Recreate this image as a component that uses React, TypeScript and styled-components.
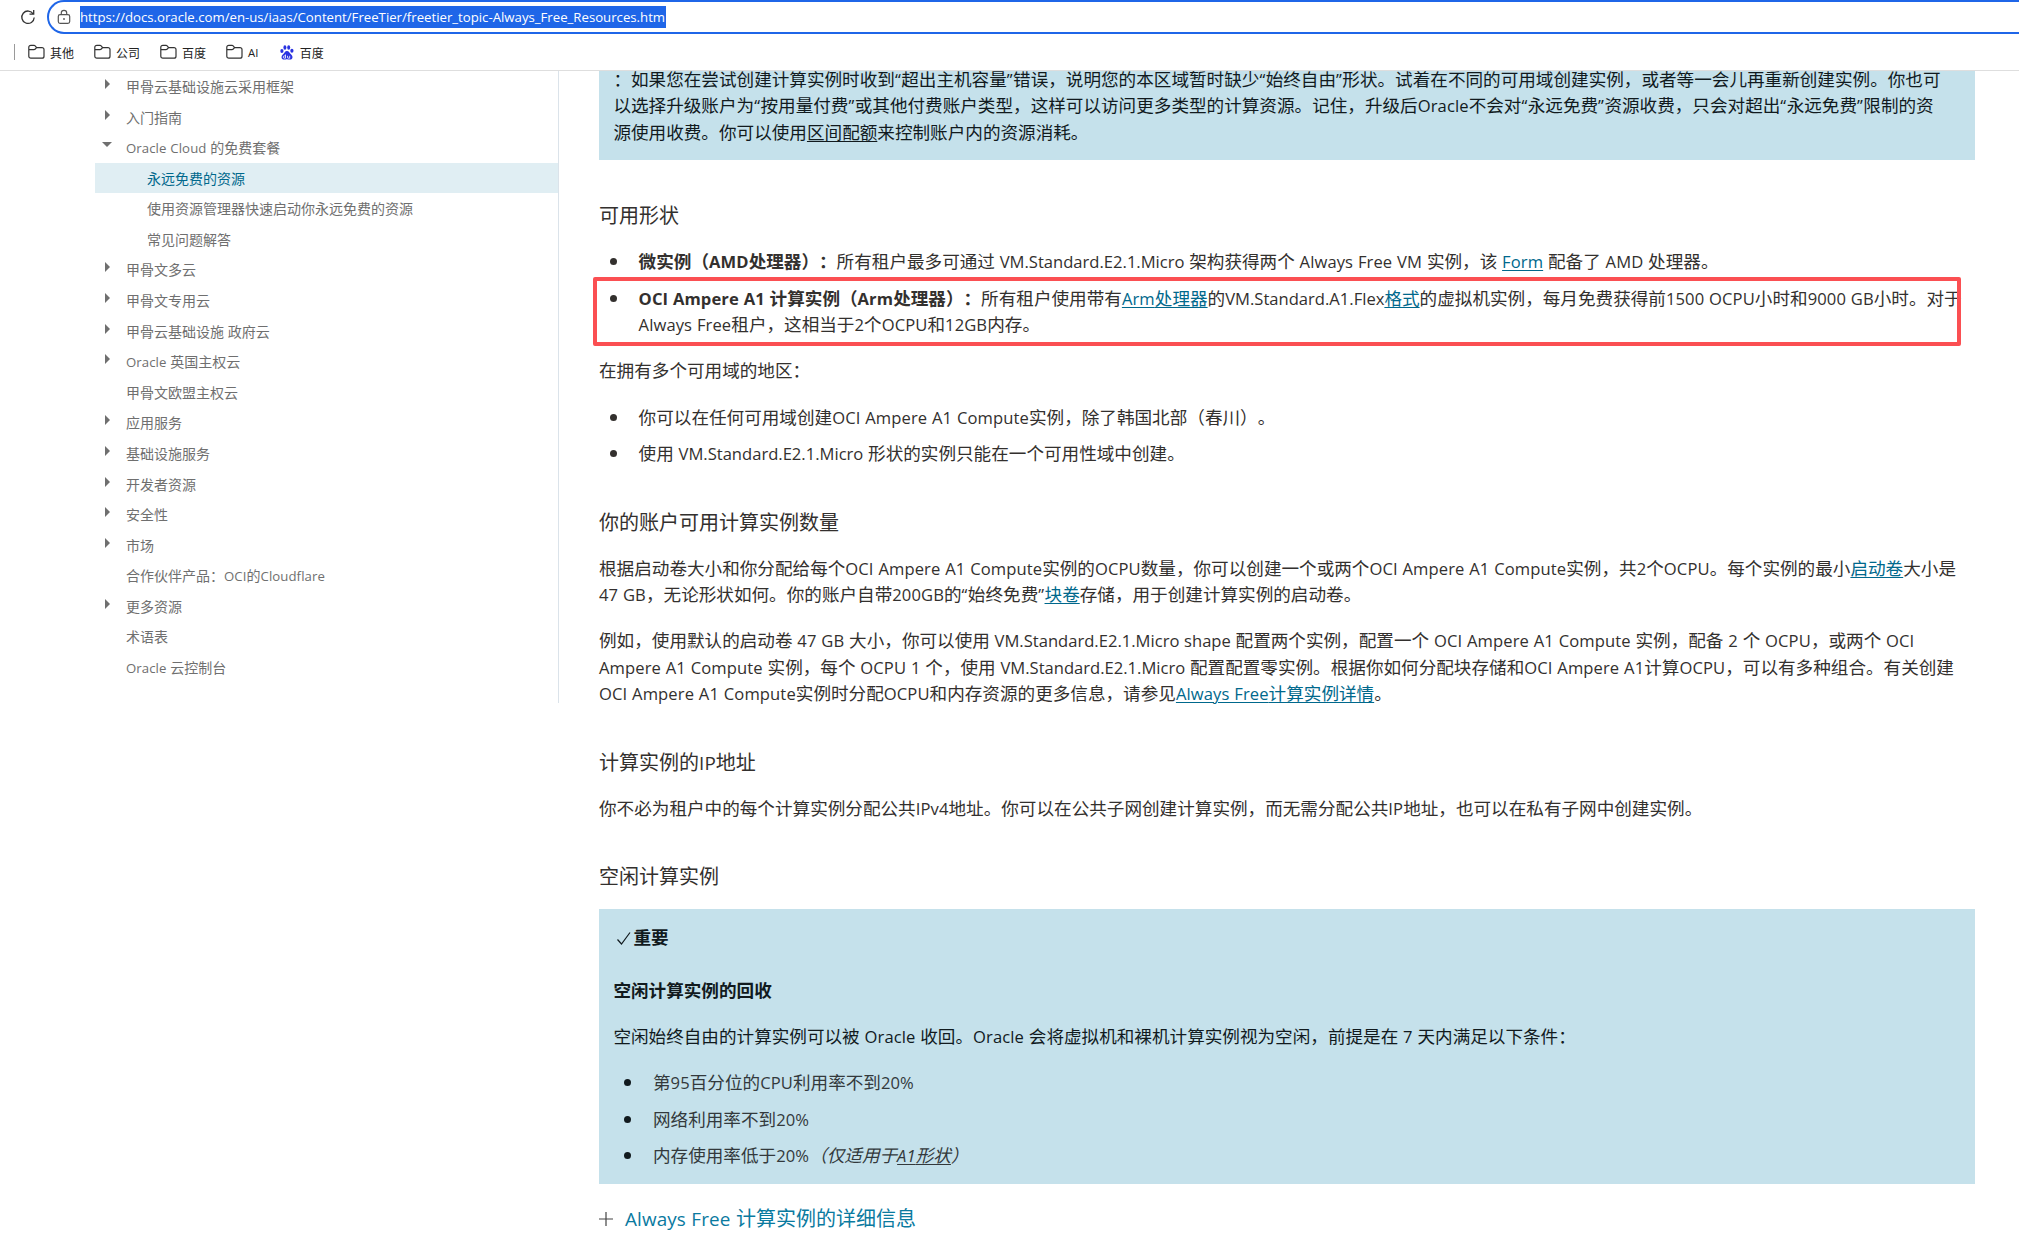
import React from "react";
import styled, { createGlobalStyle, css } from "styled-components";

const Global = createGlobalStyle`
  *, *::before, *::after { box-sizing: border-box; }
  html, body { margin: 0; background: #fff; overflow: hidden; }
  body {
    font-family: "Noto Sans CJK SC", sans-serif;
    font-size: 17.6px;
    color: #33302e;
    text-spacing-trim: space-all;
  }
`;

const Latin = styled.span<{ $spacing: number }>`
  font-family: "Open Sans", "Noto Sans", sans-serif;
  font-size: 0.943em;
  letter-spacing: ${(p) => p.$spacing}em;
  word-spacing: 0.024em;
`;

const runs = /([\u0020-\u007e]+|[\u201c\u201d])/;

const spacingOf = (run: string) => {
  if (/[\u201c\u201d]/.test(run)) return 0.03;
  return /VM\.|https/.test(run) ? 0 : 0.006;
};

/* Sets latin runs in the latin face and leaves the Chinese text as it is. */
const T = ({ children }: { children: string }) => (
  <>
    {children.split(runs).map((part, i) =>
      i % 2 ? (
        <Latin key={i} $spacing={spacingOf(part)}>
          {part}
        </Latin>
      ) : (
        part
      )
    )}
  </>
);

const Page = styled.div`
  width: 2019px;
  height: 1240px;
  overflow: hidden;
  display: flex;
  flex-direction: column;
`;

const Chrome = styled.header`
  height: 71px;
  flex: none;
  border-bottom: 1px solid #dedede;
`;

const AddressRow = styled.div`
  display: flex;
  height: 34px;
  padding-left: 20px;
  align-items: center;
`;

const AddressBox = styled.div`
  flex: 1;
  display: flex;
  align-items: center;
  height: 34px;
  margin-left: 11px;
  padding-left: 8px;
  border: 2px solid #1f66e8;
  border-right: 0;
  border-radius: 17px 0 0 17px;
`;

const Url = styled.span`
  margin-left: 9px;
  height: 22px;
  line-height: 21px;
  background: #1f66e8;
  color: #fff;
  font-size: 14px;
  width: 586px;
  white-space: nowrap;
`;

const Bookmarks = styled.div`
  display: flex;
  align-items: center;
  height: 36px;
  padding-left: 14px;
  font-size: 12px;
  color: #222;
`;

const Divider = styled.i`
  width: 1px;
  height: 16px;
  background: #9a9a9a;
  margin-right: 13px;
`;

const Bookmark = styled.div<{ $w: number }>`
  display: flex;
  align-items: center;
  gap: 5px;
  width: ${(p) => p.$w}px;
`;

const Body = styled.div`
  display: flex;
  flex: 1;
  min-height: 0;
`;

const Sidebar = styled.nav`
  margin-left: 95px;
  width: 464px;
  height: 632px;
  border-right: 1px solid #dbe3ea;
  font-size: 14px;
  color: #6f6f6f;
`;

const Item = styled.div<{ $child?: boolean; $active?: boolean }>`
  display: flex;
  height: 30.58px;
  line-height: 30px;
  padding-left: ${(p) => (p.$child ? 52 : 9)}px;
  ${(p) =>
    p.$active &&
    css`
      background: #e0eef3;
      color: #00688c;
    `}
`;

const Arrow = styled.span<{ $kind: string }>`
  width: 22px;
  display: block;
  &::before {
    content: "";
    display: block;
    width: 0;
    height: 0;
    ${(p) =>
      p.$kind === "open"
        ? css`
            margin-top: 10px;
            margin-left: -2px;
            border: 5px solid transparent;
            border-top-color: #6f6f6f;
            border-bottom: 0;
          `
        : p.$kind === "closed"
        ? css`
            margin: 8px 0 0 1px;
            border: 5px solid transparent;
            border-left-color: #6f6f6f;
            border-right: 0;
          `
        : ""}
  }
`;

const Content = styled.main`
  margin-left: 40px;
  width: 1376px;
  line-height: 26.4px;
`;

const Notice = styled.section`
  background: #c5e1eb;
  color: #111a1e;
  padding: 0 14.4px;
`;

const TopNotice = styled(Notice)`
  height: 89px;
`;

const IdleNotice = styled(Notice)`
  height: 275px;
  padding-top: 15px;
`;

const Line = styled.div`
  white-space: nowrap;
  height: 26.4px;
`;

const FirstLine = styled(Line)`
  height: 21.4px;
  line-height: 16.4px;
`;

const Heading = styled.h3<{ $top: number }>`
  margin: ${(p) => p.$top}px 0 0;
  font-size: 20px;
  line-height: 30px;
  height: 30px;
  font-weight: 400;
`;

const Para = styled.div<{ $top: number }>`
  margin-top: ${(p) => p.$top}px;
`;

const Bullet = styled.div<{ $top: number }>`
  margin-top: ${(p) => p.$top}px;
  padding-left: 11px;
  display: flex;
  &::before {
    content: "";
    flex: none;
    width: 7px;
    height: 7px;
    margin: 10px 21.6px 0 0;
    border-radius: 50%;
    background: currentColor;
  }
`;

const Boxed = styled.div`
  position: relative;
  &::after {
    content: "";
    position: absolute;
    left: -6px;
    top: -8px;
    width: 1368px;
    height: 69px;
    border: 4px solid #fb4f52;
    border-radius: 2px;
  }
`;

const Link = styled.a<{ $dark?: boolean }>`
  color: ${(p) => (p.$dark ? "inherit" : "#00688c")};
  text-decoration: underline;
  text-decoration-thickness: 1px;
  text-underline-offset: 2px;
`;

const Soft = styled(Line)`
  color: #33393c;
`;

const Check = styled.svg`
  vertical-align: -2px;
  margin-left: 3px;
`;

const Expander = styled.div`
  display: flex;
  align-items: center;
  gap: 12px;
  margin-top: 20px;
  height: 30px;
  font-size: 20px;
  color: #0a7a9f;
`;

const Folder = () => (
  <svg width="17" height="16" viewBox="0 0 17 16" fill="none" stroke="#333" strokeWidth="1.2">
    <path d="M.8 4V12.2a2 2 0 0 0 2 2H14a2 2 0 0 0 2-2V5.600a2 2 0 0 0-2-2H8.600L7.200 1.900A1.500 1.500 0 0 0 6 1.300H2.800a2 2 0 0 0-2 2V5.600H5.800a2 2 0 0 0 1.500-.6L8.600 3.600" />
  </svg>
);

const Paw = () => (
  <svg width="14" height="15" viewBox="0 0 14 15" fill="#2932e1">
    <ellipse cx="1.900" cy="6" rx="1.600" ry="2" />
    <ellipse cx="4.900" cy="2.500" rx="1.500" ry="2.200" />
    <ellipse cx="8.700" cy="2.500" rx="1.500" ry="2.200" />
    <ellipse cx="11.900" cy="5.700" rx="1.600" ry="2" />
    <path d="M6.900 6c-2 0-2.400 2.200-4.100 3.500C.8 11.300 1.300 14.500 4 14.600c1.500 0 1.800-.3 3-.3s1.800.4 3.200.3c2.600-.2 3-3.300 1.200-4.900C9.600 8.200 9 6 6.900 6z" />
    <path d="M5.500 9.500v3.700H4.400a1.100 1.100 0 0 1 0-2.300h1.100M7.500 10.800v1.700q0 .7.700.7h1.500v-2.400" fill="none" stroke="#fff" strokeWidth=".8" />
  </svg>
);

const nav: [string, string][] = [
  ["closed", "甲骨云基础设施云采用框架"],
  ["closed", "入门指南"],
  ["open", "Oracle Cloud 的免费套餐"],
  ["active", "永远免费的资源"],
  ["child", "使用资源管理器快速启动你永远免费的资源"],
  ["child", "常见问题解答"],
  ["closed", "甲骨文多云"],
  ["closed", "甲骨文专用云"],
  ["closed", "甲骨云基础设施 政府云"],
  ["closed", "Oracle 英国主权云"],
  ["none", "甲骨文欧盟主权云"],
  ["closed", "应用服务"],
  ["closed", "基础设施服务"],
  ["closed", "开发者资源"],
  ["closed", "安全性"],
  ["closed", "市场"],
  ["none", "合作伙伴产品：OCI的Cloudflare"],
  ["closed", "更多资源"],
  ["none", "术语表"],
  ["none", "Oracle 云控制台"],
];

export default function App() {
  return (
    <Page lang="zh-CN">
      <Global />
      <Chrome>
        <AddressRow>
          <svg width="16" height="16" viewBox="0 0 16 16" fill="none" stroke="#333" strokeWidth="1.300">
            <path d="M13.300 5A6.200 6.200 0 1 0 14.200 8.500M13.700 1v4.200H9.500" />
          </svg>
          <AddressBox>
            <svg width="14" height="16" viewBox="0 0 14 16" fill="none" stroke="#555" strokeWidth="1.200">
              <rect x="1.300" y="5.600" width="11.400" height="8.800" rx="1.800" />
              <path d="M4.300 5.500V4a2.700 2.700 0 0 1 5.400 0V5.500" />
              <circle cx="7" cy="10" r=".9" fill="#555" stroke="none" />
            </svg>
            <Url><T>https://docs.oracle.com/en-us/iaas/Content/FreeTier/freetier_topic-Always_Free_Resources.htm</T></Url>
          </AddressBox>
        </AddressRow>
        <Bookmarks>
          <Divider />
          <Bookmark $w={66}><Folder />其他</Bookmark>
          <Bookmark $w={66}><Folder />公司</Bookmark>
          <Bookmark $w={66}><Folder />百度</Bookmark>
          <Bookmark $w={54}><Folder /><T>AI</T></Bookmark>
          <Bookmark $w={60}><Paw />&#8202;百度</Bookmark>
        </Bookmarks>
      </Chrome>
      <Body>
        <Sidebar>
          {nav.map(([kind, label]) => (
            <Item key={label} $child={kind === "active" || kind === "child"} $active={kind === "active"}>
              {kind !== "active" && kind !== "child" && <Arrow $kind={kind} />}
              <span><T>{label}</T></span>
            </Item>
          ))}
        </Sidebar>
        <Content>
          <TopNotice>
            <FirstLine><T>：如果您在尝试创建计算实例时收到“超出主机容量”错误，说明您的本区域暂时缺少“始终自由”形状。试着在不同的可用域创建实例，或者等一会儿再重新创建实例。你也可</T></FirstLine>
            <Line><T>以选择升级账户为“按用量付费”或其他付费账户类型，这样可以访问更多类型的计算资源。记住，升级后Oracle不会对“永远免费”资源收费，只会对超出“永远免费”限制的资</T></Line>
            <Line>源使用收费。你可以使用<Link $dark>区间配额</Link>来控制账户内的资源消耗。</Line>
          </TopNotice>
          <Heading $top={40}>可用形状</Heading>
          <Bullet $top={18}>
            <Line><b><T>微实例（AMD处理器）：</T></b><T>所有租户最多可通过 VM.Standard.E2.1.Micro 架构获得两个 Always Free VM 实例，该 </T><Link><T>Form</T></Link><T> 配备了 AMD 处理器。</T></Line>
          </Bullet>
          <Boxed>
            <Bullet $top={10.5}>
              <div>
                <Line><b><T>OCI Ampere A1 计算实例（Arm处理器）：</T></b>所有租户使用带有<Link><T>Arm处理器</T></Link><T>的VM.Standard.A1.Flex</T><Link>格式</Link><T>的虚拟机实例，每月免费获得前1500 OCPU小时和9000 GB小时。对于</T></Line>
                <Line><T>Always Free租户，这相当于2个OCPU和12GB内存。</T></Line>
              </div>
            </Bullet>
          </Boxed>
          <Para $top={19.5}><Line>在拥有多个可用域的地区：</Line></Para>
          <Bullet $top={20}><Line><T>你可以在任何可用域创建OCI Ampere A1 Compute实例，除了韩国北部（春川）。</T></Line></Bullet>
          <Bullet $top={10}><Line><T>使用 VM.Standard.E2.1.Micro 形状的实例只能在一个可用性域中创建。</T></Line></Bullet>
          <Heading $top={40.8}>你的账户可用计算实例数量</Heading>
          <Para $top={17.8}>
            <Line><T>根据启动卷大小和你分配给每个OCI Ampere A1 Compute实例的OCPU数量，你可以创建一个或两个OCI Ampere A1 Compute实例，共2个OCPU。每个实例的最小</T><Link>启动卷</Link>大小是</Line>
            <Line><T>47 GB，无论形状如何。你的账户自带200GB的“始终免费”</T><Link>块卷</Link>存储，用于创建计算实例的启动卷。</Line>
          </Para>
          <Para $top={19.5}>
            <Line><T>例如，使用默认的启动卷 47 GB 大小，你可以使用 VM.Standard.E2.1.Micro shape 配置两个实例，配置一个 OCI Ampere A1 Compute 实例，配备 2 个 OCPU，或两个 OCI</T></Line>
            <Line><T>Ampere A1 Compute 实例，每个 OCPU 1 个，使用 VM.Standard.E2.1.Micro 配置配置零实例。根据你如何分配块存储和OCI Ampere A1计算OCPU，可以有多种组合。有关创建</T></Line>
            <Line><T>OCI Ampere A1 Compute实例时分配OCPU和内存资源的更多信息，请参见</T><Link><T>Always Free计算实例详情</T></Link>。</Line>
          </Para>
          <Heading $top={40.2}><T>计算实例的IP地址</T></Heading>
          <Para $top={18.2}><Line><T>你不必为租户中的每个计算实例分配公共IPv4地址。你可以在公共子网创建计算实例，而无需分配公共IP地址，也可以在私有子网中创建实例。</T></Line></Para>
          <Heading $top={39.5}>空闲计算实例</Heading>
          <Para $top={18}>
            <IdleNotice>
              <Line>
                <Check width="17" height="16" viewBox="0 0 17 16" fill="none" stroke="#111a1e" strokeWidth="1.200">
                  <path d="M1.500 9.500 5.500 14 14 2.500" />
                </Check>
                <b>重要</b>
              </Line>
              <Para $top={27}><Line><b>空闲计算实例的回收</b></Line></Para>
              <Para $top={19.6}><Line><T>空闲始终自由的计算实例可以被 Oracle 收回。Oracle 会将虚拟机和裸机计算实例视为空闲，前提是在 7 天内满足以下条件：</T></Line></Para>
              <Bullet $top={19.6}><Soft><T>第95百分位的CPU利用率不到20%</T></Soft></Bullet>
              <Bullet $top={10.4}><Soft><T>网络利用率不到20%</T></Soft></Bullet>
              <Bullet $top={9.8}><Soft><T>内存使用率低于20%</T><i>（仅适用于<Link $dark><T>A1形状</T></Link>）</i></Soft></Bullet>
            </IdleNotice>
          </Para>
          <Expander>
            <svg width="14" height="14" viewBox="0 0 14 14" stroke="#444" strokeWidth="1.200"><path d="M0 7H14M7 0V14" /></svg>
            <span><T>Always Free 计算实例的详细信息</T></span>
          </Expander>
        </Content>
      </Body>
    </Page>
  );
}
